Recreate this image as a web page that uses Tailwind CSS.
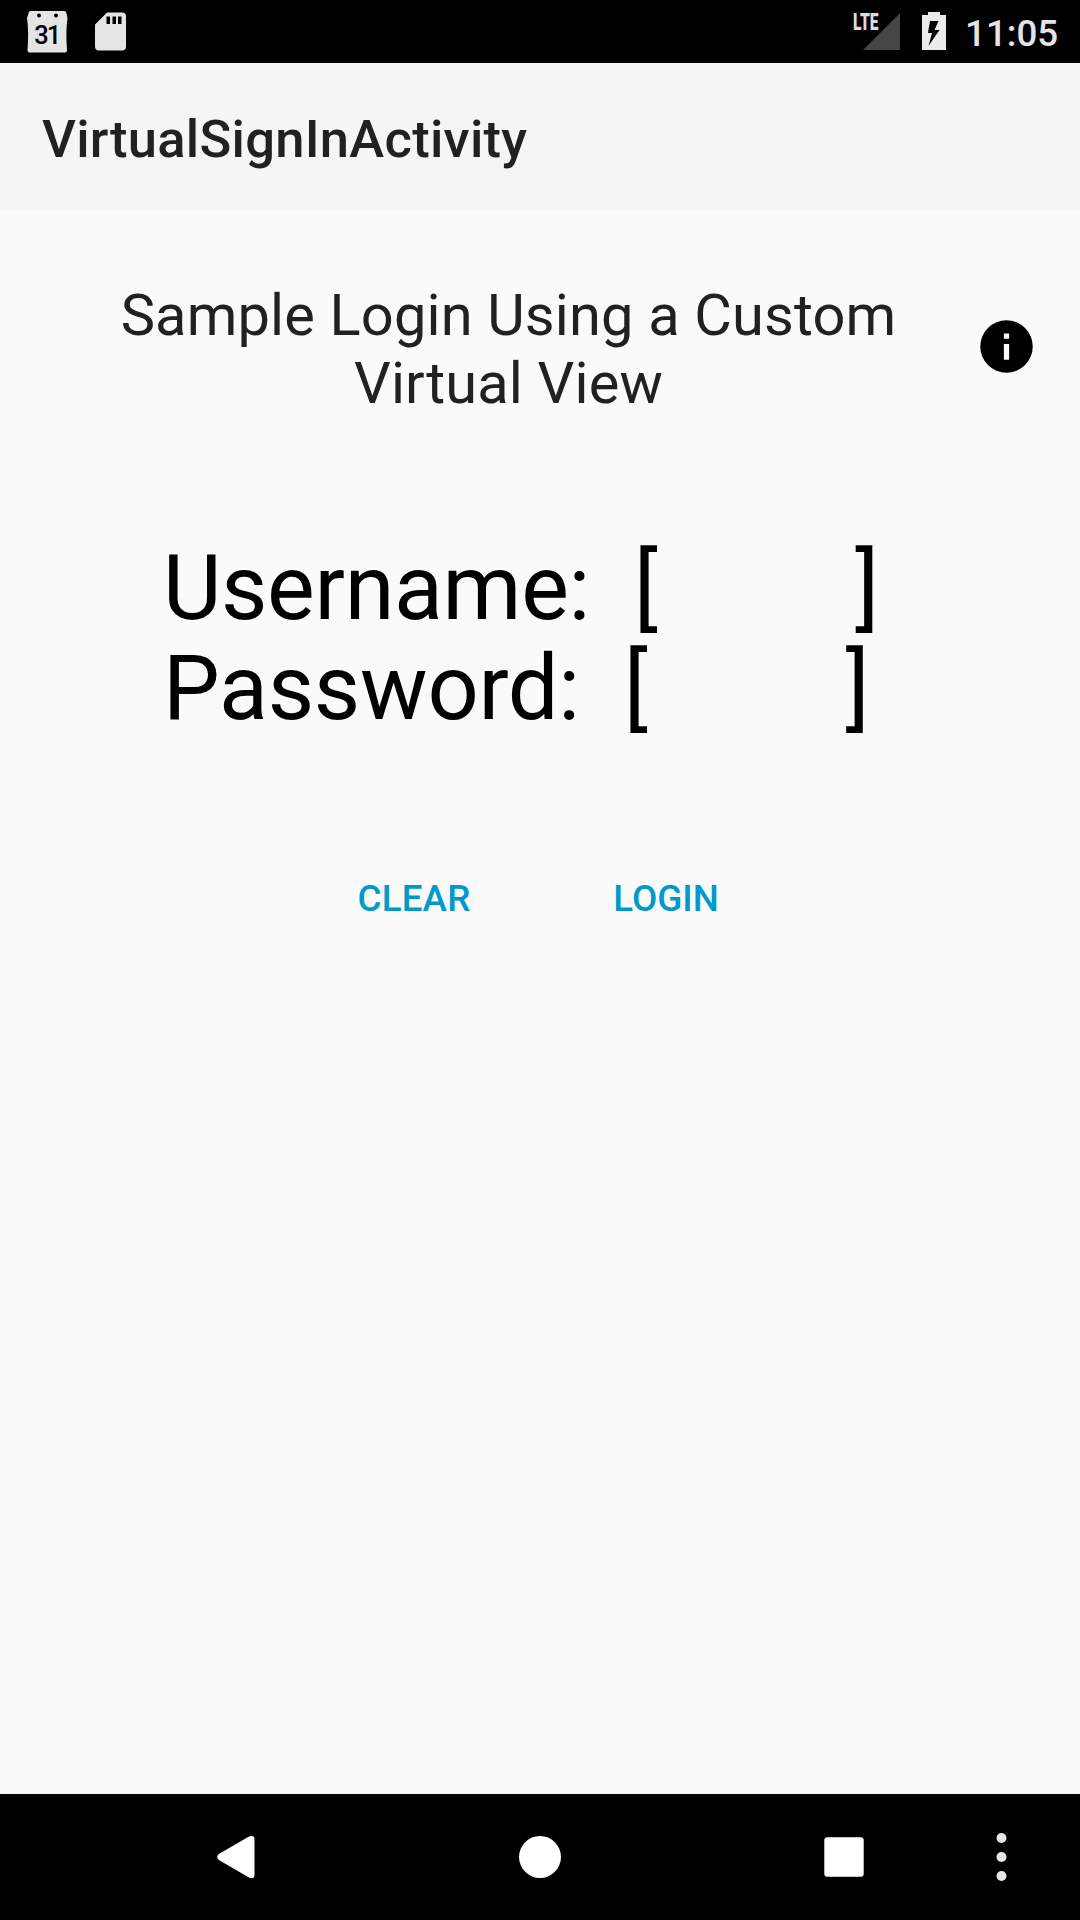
<!DOCTYPE html>
<html lang="en">
<head>
<meta charset="utf-8">
<title>VirtualSignInActivity</title>
<script src="https://cdn.jsdelivr.net/npm/@tailwindcss/browser@4"></script>
</head>
<body class="flex h-[1920px] w-[1080px] flex-col overflow-hidden bg-[#fafafa] font-['Roboto',sans-serif] text-[#212121]">
  <header class="flex h-[63px] shrink-0 items-start bg-black">
    <svg class="h-[63px] w-[160px]" viewBox="0 0 160 63" fill="#e4e4e4">
      <path d="M31 11H64Q66.500 11 66.500 13.500L67.500 18Q65.500 32 67 50Q67 52.500 65 52.500H29.500Q27.500 52.500 27.500 50Q29 32 27 18L28.500 13.500Q28.500 11 31 11Z"/>
      <circle cx="39" cy="15.500" r="2" fill="#000"/><circle cx="56" cy="15.500" r="2" fill="#000"/>
      <text x="34.300" y="43.800" font-family="Roboto" font-weight="500" font-size="25.500" textLength="27" fill="#000">31</text>
      <path fill-rule="evenodd" d="M107 12.500H122Q126 12.500 126 16.500V46.500Q126 50.500 122 50.500H99Q95 50.500 95 46.500V24.500ZM106.500 16.500V24H110V16.500ZM112.500 16.500V24H116V16.500ZM118 16.500V24H121.500V16.500Z"/>
    </svg>
    <svg class="ml-auto h-[63px] w-[115px]" viewBox="850 0 115 63">
      <text x="853" y="30" font-family="Roboto" font-weight="900" font-size="23" textLength="25.500" lengthAdjust="spacingAndGlyphs" fill="#dcdcdc">LTE</text>
      <path d="M900 13V50H863Z" fill="#464646"/>
      <path fill-rule="evenodd" fill="#ebebeb" d="M928 12H940V15H946V50H922V15H928ZM930 21L928 33H932L928.500 46L939.500 30H934.500L938.500 21Z"/>
    </svg>
    <div class="w-[115px] text-[36.75px] leading-[67px] font-medium text-[#e4e4e4]">11:05</div>
  </header>
  <div class="flex h-[147px] shrink-0 items-center bg-[#f5f5f5] pt-[5px] pl-[42px]">
    <h1 class="text-[52.5px] leading-none font-medium tracking-[0.28px]">VirtualSignInActivity</h1>
  </div>
  <main class="flex flex-1 flex-col">
    <section class="flex pt-[71px]">
      <h2 class="ml-[42px] w-[933px] text-center text-[57.75px] leading-[68px] tracking-[0.16px]">Sample Login Using a Custom<br>Virtual View</h2>
      <svg class="mt-[34px] size-[63px]" viewBox="0 0 24 24"><path d="M12 2a10 10 0 1 0 0 20 10 10 0 0 0 0-20Zm1 15h-2v-6h2Zm0-8h-2V7h2Z"/></svg>
    </section>
    <section class="mt-[122px] pl-[163px] text-[90px] leading-[100px] whitespace-pre text-black"><div class="tracking-[-0.35px]">Username:  [         ]</div><div class="tracking-[-0.28px]">Password:  [         ]</div></section>
    <section class="mt-[97px] flex h-[126px] pl-[288px] text-[36.75px] font-medium text-[#0099cc]">
      <button class="w-[252px] tracking-[0.15px]">CLEAR</button>
      <button class="w-[252px]">LOGIN</button>
    </section>
  </main>
  <nav class="h-[126px] shrink-0 bg-black">
    <svg class="size-full" viewBox="0 0 1080 126" fill="#fff">
      <path d="M218.800 60L249 42.500Q254.500 40.500 254.500 45V81Q254.500 85.500 249 83.500L218.800 66Q215.500 63 218.800 60Z"/>
      <circle cx="540" cy="63" r="21"/>
      <rect x="824.300" y="43.300" width="39.400" height="39.400" rx="3"/>
      <g fill="#e6e6e6"><circle cx="1001.500" cy="44" r="5"/><circle cx="1001.500" cy="63" r="5"/><circle cx="1001.500" cy="82" r="5"/></g>
    </svg>
  </nav>
</body>
</html>
